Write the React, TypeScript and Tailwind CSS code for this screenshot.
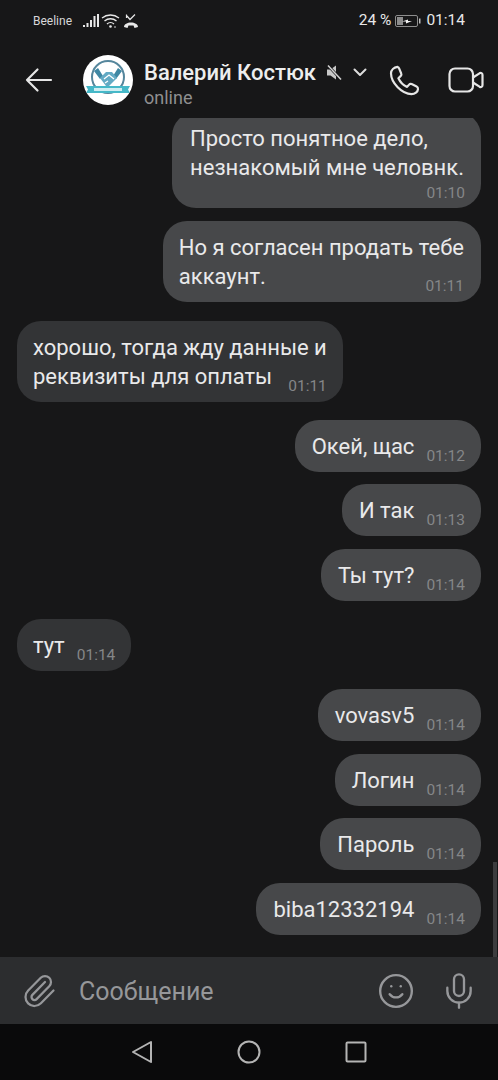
import React from 'react';
import { Paperclip, Smile, Mic } from 'lucide-react';

type Msg = { id: number; mine: boolean; lines: string[]; time: string; block?: boolean; top: string };

const messages: Msg[] = [
  { id: 1, mine: true, lines: ['Просто понятное дело,', 'незнакомый мне человнк.'], time: '01:10', block: true, top: '-mt-[6px]' },
  { id: 2, mine: true, lines: ['Но я согласен продать тебе', 'аккаунт.'], time: '01:11', top: 'mt-[13px]' },
  { id: 3, mine: false, lines: ['хорошо, тогда жду данные и', 'реквизиты для оплаты'], time: '01:11', top: 'mt-[19px]' },
  { id: 4, mine: true, lines: ['Окей, щас'], time: '01:12', top: 'mt-[18px]' },
  { id: 5, mine: true, lines: ['И так'], time: '01:13', top: 'mt-[12px]' },
  { id: 6, mine: true, lines: ['Ты тут?'], time: '01:14', top: 'mt-[13px]' },
  { id: 7, mine: false, lines: ['тут'], time: '01:14', top: 'mt-[18px]' },
  { id: 8, mine: true, lines: ['vovasv5'], time: '01:14', top: 'mt-[18px]' },
  { id: 9, mine: true, lines: ['Логин'], time: '01:14', top: 'mt-[13px]' },
  { id: 10, mine: true, lines: ['Пароль'], time: '01:14', top: 'mt-[12px]' },
  { id: 11, mine: true, lines: ['biba12332194'], time: '01:14', top: 'mt-[13px]' },
];

const Bubble: React.FC<{ m: Msg }> = ({ m }) => {
  const bg = m.mine ? 'bg-[#47484a] self-end' : 'bg-[#333436] self-start';
  if (m.block) {
    return (
      <div className={`${bg} ${m.top} rounded-[24px] pl-[18px] pr-[17px] pt-[12px] pb-[7px] w-fit shrink-0`}>
        <div className="text-[22px] leading-[29px] text-[#e9e9ea] whitespace-nowrap">
          {m.lines.map(l => <div key={l}>{l}</div>)}
        </div>
        <div className="text-[15.500px] leading-[15px] text-[#858688] text-right mt-[4px] -mr-[1px]">{m.time}</div>
      </div>
    );
  }
  const last = m.lines[m.lines.length - 1];
  // single-line outgoing bubbles sit a pixel further right than the rest
  const pad = m.mine && m.lines.length === 1 ? 'pl-[17px] pr-[16px]' : m.mine ? 'pl-[16px] pr-[17px]' : 'pl-[16px] pr-[16px]';
  return (
    <div className={`${bg} ${m.top} ${pad} rounded-[24px] pt-[12px] pb-[11px] w-fit shrink-0`}>
      <div className="text-[22px] leading-[29px] text-[#e9e9ea] whitespace-nowrap">
        {m.lines.slice(0, -1).map(l => <div key={l}>{l}</div>)}
        <div className="flex items-end justify-between gap-[12px]">
          <span>{last}</span>
          <span className="text-[15.500px] leading-[15px] text-[#858688] -mb-[3px]">{m.time}</span>
        </div>
      </div>
    </div>
  );
};

export default function App() {
  return (
    <div className="w-[498px] h-[1080px] bg-[#171718] flex flex-col overflow-hidden font-['Roboto',sans-serif] relative">
      {/* Status bar */}
      <div className="h-[42px] shrink-0 flex items-center pl-[33px] pr-[33px] text-white">
        <span className="text-[12px] text-[#d8d8d8]">Beeline</span>
        <svg width="58" height="16" viewBox="0 0 58 16" className="ml-[10px]" fill="none">
          <rect x="1" y="12" width="2" height="2" fill="#e8e8e8" />
          <rect x="4.500" y="10" width="2" height="4" fill="#e8e8e8" />
          <rect x="8" y="7" width="2" height="7" fill="#e8e8e8" />
          <rect x="11.500" y="3" width="2" height="11" fill="#e8e8e8" />
          <rect x="15" y="1" width="2" height="13" fill="#e8e8e8" />
          <path d="M20 5c5-4 12-4 17 0M22.500 8c3.500-3 8.500-3 12 0M25 11c2-1.800 5-1.800 7 0" stroke="#e8e8e8" strokeWidth="1.300" />
          <circle cx="28.500" cy="13.500" r="1.300" fill="#e8e8e8" />
          <circle cx="33" cy="14" r="0.800" fill="#e8e8e8" />
          <path d="M42 14c0-6 14-6 14 0l-3.500 1-1-2.500h-5l-1 2.500z" fill="#e8e8e8" />
          <path d="M45 3l3 3.500 5-5M44.500 1.500v3.500" stroke="#e8e8e8" strokeWidth="1.200" />
        </svg>
        <div className="ml-auto flex items-center">
          <span className="text-[15.500px] text-[#e8e8e8]">24 %</span>
          <svg width="26" height="14" viewBox="0 0 26 14" className="ml-[4px]" fill="none">
            <rect x="0.500" y="1.500" width="22" height="11" rx="1.500" stroke="#8d8d8d" />
            <rect x="2" y="3" width="6" height="8" fill="#8d8d8d" />
            <rect x="24" y="4.500" width="1.500" height="5" fill="#bdbdbd" />
            <path d="M7 7.500l6-2v1.500h4l-6 2.500v-2z" fill="#f2f2f2" />
          </svg>
          <span className="text-[15.500px] text-[#e8e8e8] ml-[5px]">01:14</span>
        </div>
      </div>

      {/* Header */}
      <div className="h-[76px] shrink-0 flex items-center relative z-10 bg-[#171718]">
        <svg width="28" height="26" viewBox="0 0 28 26" className="ml-[25px]" fill="none">
          <path d="M26 13H2M12.500 2.500L2 13l10.500 10.500" stroke="#e6e6e6" strokeWidth="2.200" strokeLinecap="round" strokeLinejoin="round" />
        </svg>
        <div className="ml-[30px] w-[50px] h-[50px] rounded-full bg-white overflow-hidden shrink-0">
          <svg width="50" height="50" viewBox="0 0 50 50" fill="none">
            <circle cx="25" cy="22" r="16" stroke="#55869c" strokeWidth="2" />
            <path d="M11 16l4-3 5 8-3 3zM39 16l-4-3-5 8 3 3z" fill="#3f87a3" />
            <path d="M17 23l6-6h6l5 6-8 8h-3z" fill="#63aac4" />
            <path d="M21 24l5-4 5 4M22 28l3-2" stroke="#ffffff" strokeWidth="1.300" />
            <path d="M3 31h44l-2 3.500 2 3.500H3l2-3.500z" fill="#45b8c8" />
            <rect x="11" y="33" width="28" height="3" fill="#cfeef2" />
          </svg>
        </div>
        <div className="ml-[11px] flex flex-col mt-[8px] w-[225px] shrink-0">
          <div className="flex items-center h-[26px]">
            <span className="text-[22px] font-medium text-[#eeeeee] whitespace-nowrap">Валерий Костюк</span>
            <svg width="16" height="17" viewBox="0 0 16 17" className="ml-[10px]" fill="none">
              <path d="M1 5.500h3.500L10 1.500v14l-5.500-4H1z" fill="#c8c8c8" />
              <path d="M2 1.500l13 14" stroke="#171718" strokeWidth="2.600" />
              <path d="M2 1.500l13 14" stroke="#d2d2d2" strokeWidth="1.500" />
            </svg>
            <svg width="14" height="9" viewBox="0 0 14 9" className="ml-[11px]" fill="none">
              <path d="M1.500 1.500L7 7l5.500-5.500" stroke="#dcdcdc" strokeWidth="2" strokeLinecap="round" strokeLinejoin="round" />
            </svg>
          </div>
          <span className="text-[18px] leading-[22px] text-[#8f8f90] mt-[1px]">online</span>
        </div>
        <svg width="31" height="31" viewBox="0 0 31 31" className="ml-[20px]" fill="none">
          <path d="M8.500 1.800c-3.500.600-6.500 3-6.500 6.500 0 9.500 11 20.800 20.500 20.800 3.500 0 6.300-2.300 6.500-5 .1-1.200-.4-2-1.400-2.500l-5-2.500c-.9-.4-1.800-.3-2.500.5l-2 2.300c-3.500-1.500-7-5-8.700-8.700l2.400-2.300c.7-.7.8-1.500.4-2.400l-2.200-5.300c-.3-.8-.9-1.200-1.500-1.200z" stroke="#e6e6e6" strokeWidth="2.200" strokeLinejoin="round" />
        </svg>
        <svg width="36" height="26" viewBox="0 0 36 26" className="ml-[28px]" fill="none">
          <rect x="1.500" y="1.500" width="23.500" height="23" rx="5.500" stroke="#e6e6e6" strokeWidth="2.200" />
          <path d="M25 10.500l6.500-4.200c1.500-.9 3-.1 3 1.600v10.200c0 1.700-1.500 2.500-3 1.600L25 15.500" stroke="#e6e6e6" strokeWidth="2.200" strokeLinejoin="round" />
        </svg>
      </div>

      {/* Messages */}
      <div className="flex-1 flex flex-col px-[17px] min-h-0 overflow-hidden">
        {messages.map(m => <Bubble key={m.id} m={m} />)}
      </div>

      {/* Scrollbar */}
      <div className="absolute right-[1px] top-[862px] w-[4px] h-[95px] bg-[#3c3c3e]" />

      {/* Composer */}
      <div className="h-[67px] shrink-0 bg-[#2c2d2f] flex items-center">
        <Paperclip className="ml-[21px] w-[36px] h-[36px] text-[#96979a]" strokeWidth={1.500} />
        <span className="ml-[22px] mt-[2px] text-[25px] text-[#96979a] whitespace-nowrap">Сообщение</span>
        <Smile className="ml-auto w-[38px] h-[38px] text-[#96979a]" strokeWidth={1.500} />
        <Mic className="ml-[24px] mr-[19px] w-[40px] h-[40px] text-[#96979a]" strokeWidth={1.400} />
      </div>

      {/* Nav bar */}
      <div className="h-[56px] shrink-0 bg-[#0a0a0b] flex items-center justify-center gap-[84px]">
        <svg width="22" height="24" viewBox="0 0 22 24" fill="none">
          <path d="M20 2L2 12l18 10z" stroke="#b4b4b4" strokeWidth="2" strokeLinejoin="round" />
        </svg>
        <svg width="24" height="24" viewBox="0 0 24 24" fill="none">
          <circle cx="12" cy="12" r="10.500" stroke="#b4b4b4" strokeWidth="2" />
        </svg>
        <svg width="22" height="22" viewBox="0 0 22 22" fill="none">
          <rect x="1.500" y="1.500" width="19" height="19" rx="1" stroke="#b4b4b4" strokeWidth="2" />
        </svg>
      </div>
    </div>
  );
}
